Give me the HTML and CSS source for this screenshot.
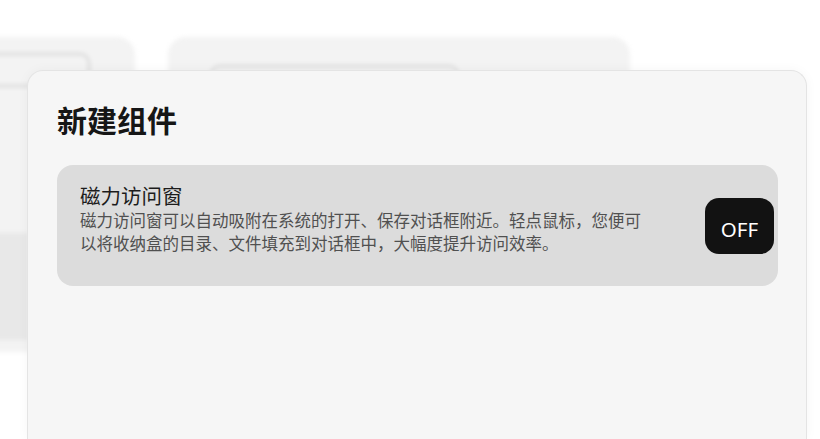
FILE: index.html
```html
<!DOCTYPE html>
<html lang="zh-CN">
<head>
    <meta charset="UTF-8">
    <meta name="viewport" content="width=device-width, initial-scale=1.0">
    <title>新建组件</title>
    <link rel="stylesheet" href="styles.css">
</head>
<body>
    <!-- página de fondo, desenfocada detrás del diálogo -->
    <div class="backdrop">
        <div class="bg-card bg-left">
            <div class="bg-field"></div>
            <div class="bg-block"></div>
        </div>
        <div class="bg-card bg-main">
            <div class="bg-bar"></div>
        </div>
    </div>

    <div class="dialog">
        <h1 class="dialog-title">新建组件</h1>

        <div class="widget-item">
            <div class="widget-text">
                <div class="widget-name">磁力访问窗</div>
                <p class="widget-desc">磁力访问窗可以自动吸附在系统的打开、保存对话框附近。轻点鼠标，您便可以将收纳盒的目录、文件填充到对话框中，大幅度提升访问效率。</p>
            </div>
            <button class="toggle">OFF</button>
        </div>
    </div>
</body>
</html>
```

FILE: styles.css
```css
/* Estilos comunes */
body {
    margin: 0;
    width: 820px;
    height: 439px;
    overflow: hidden;
    background-color: #fff;
    font-family: "Noto Sans CJK SC", "Noto Sans", sans-serif;
    position: relative;
}

/* Fondo */
.backdrop {
    display: flex;
    gap: 33px;
    margin-left: -40px;
    padding-top: 37px;
    filter: blur(2px);
}

.bg-card {
    background-color: #f3f3f3;
    border-radius: 18px;
    height: 315px;
}

.bg-left {
    width: 175px;
    display: flex;
    flex-direction: column;
}

.bg-field {
    margin: 16px 45px 0 -20px;
    height: 30px;
    border: 2px solid #d2d2d2;
    border-radius: 10px;
}

.bg-block {
    margin-top: 146px;
    width: 68px;
    height: 107px;
    background-color: #e8e8e8;
}

.bg-main {
    width: 462px;
    padding-top: 28px;
    box-sizing: border-box;
}

.bg-bar {
    margin-left: 42px;
    width: 245px;
    height: 30px;
    border: 2px solid #d4d4d4;
    border-radius: 10px;
}

/* Diálogo */
.dialog {
    position: absolute;
    left: 27px;
    top: 70px;
    width: 780px;
    height: 369px;
    box-sizing: border-box;
    padding: 30px 28px 30px 29px;
    background-color: #f6f6f6;
    border: 1px solid #e4e4e4;
    border-bottom: none;
    border-radius: 16px 16px 0 0;
    box-shadow: 0 0 12px rgba(0, 0, 0, 0.04);
}

.dialog-title {
    margin: 0 0 28px;
    font-size: 30px;
    line-height: 36px;
    font-weight: 700;
    color: #161616;
}

.widget-item {
    display: flex;
    align-items: center;
    justify-content: space-between;
    padding: 17px 4px 17px 23px;
    background-color: #dcdcdc;
    border-radius: 16px;
}

.widget-text {
    padding-bottom: 14px;
}

.widget-name {
    font-size: 20.5px;
    line-height: 27px;
    color: #1c1c1c;
}

.widget-desc {
    margin: 0;
    max-width: 570px;
    font-size: 16.5px;
    line-height: 23px;
    color: #505050;
}

.toggle {
    width: 69px;
    height: 56px;
    border: none;
    border-radius: 14px;
    background-color: #121212;
    color: #fff;
    font-family: "Noto Sans", sans-serif;
    font-size: 20.5px;
    padding: 6px 0 0;
}
```
